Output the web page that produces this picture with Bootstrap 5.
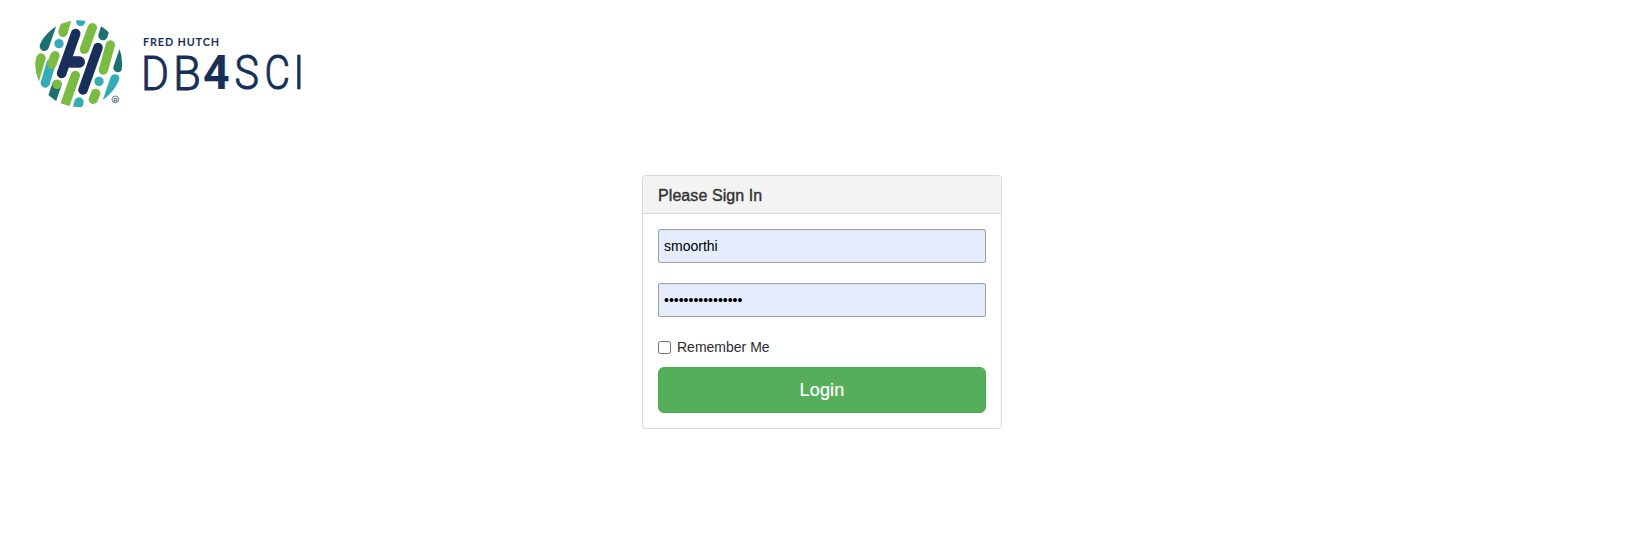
<!DOCTYPE html>
<html lang="en">
<head>
<meta charset="utf-8">
<title>DB4Sci</title>
<meta name="viewport" content="width=device-width, initial-scale=1">
<link href="https://cdn.jsdelivr.net/npm/bootstrap@5.3.0/dist/css/bootstrap.min.css" rel="stylesheet">
<style>
body { font-family: "Liberation Sans", Arial, sans-serif; font-size: 14px; line-height: 20px; color: #333; background: #fff; }
.brand-bar { padding: 15px 0 0 30px; height: 175px; }
.signin-area { padding-right: 5px; }
.signin { width: 360px; border: 1px solid #d9d9d9; border-radius: 4px; box-shadow: 0 1px 1px rgba(0,0,0,.05); }
.signin .card-header { height: 38px; padding: 2px 15px 0; background: #f3f3f3; border-color: #d9d9d9; }
.signin h1 { font-size: 16px; line-height: 18px; font-weight: 400; -webkit-text-stroke: .4px #333; letter-spacing: .08px; }
.signin .card-body { padding: 15px; }
.signin .form-control { height: 34px; padding: 0 5px; font-size: 14px; color: #000; background: #e5edfc; border: 1px solid #9fa1a5; border-radius: 2px; box-shadow: inset 0 1px 1px rgba(0,0,0,.05); }
.signin .field { margin-bottom: 20px; }
.signin .form-check-input { width: 13px; height: 13px; border: 1px solid #6f6f6f; border-radius: 2.5px; float: none; }
.remember { height: 20px; margin: 20px 0 10px; gap: 6px; color: #2b2b2b; }
.btn-login { height: 46px; padding: 0; font-size: 18px; letter-spacing: .2px; color: #fff; background: #55af5a; border: 1px solid #4caa50; border-radius: 6px; -webkit-text-stroke: .2px #fff; }
.btn-login:hover { color: #fff; background: #499c4e; }
</style>
</head>
<body>
<header class="brand-bar">
  <svg class="d-block" width="280" height="100" viewBox="0 0 280 100" role="img" aria-label="Fred Hutch DB4SCI">
    <defs><clipPath id="disc"><circle cx="146" cy="146" r="130.500"/></clipPath></defs>
    <g transform="scale(.33333)">
      <g clip-path="url(#disc)" fill="none" stroke-width="28" stroke-linecap="round">
        <g stroke="#1d7072">
          <path d="M43 94L66 28M219 62L233 16M264 158L284 100M81 208L62 264"/>
        </g>
        <g stroke="#35acb5">
          <path d="M152 6V19M63 146L46 204M147 261L138 292M87 86h.1M207 199h.1"/>
        </g>
        <g stroke="#7abb42">
          <path d="M110 15L99 52M187 38L163 103M241 90L220 165M197 235L190 253M136 181L104 272M75 122L65 148M33 129L12 200M81 208h.1"/>
        </g>
        <path d="M241 188C246 173 270 174 269 194C265 220 246 244 215 264Z" fill="#35acb5"/>
        <path d="M137 56L95 175M204 98L159 225" stroke="#17305a" stroke-width="29"/>
        <path d="M122 141H148" stroke="#17305a" stroke-width="34"/>
      </g>
      <circle cx="256" cy="253" r="10" fill="#fff" stroke="#42606f" stroke-width="2.500"/>
    </g>
    <text x="85.400" y="86.500" text-anchor="middle" font-family="Liberation Sans, sans-serif" font-size="5.500" font-weight="700" fill="#42606f">R</text>
    <text x="113" y="30.500" textLength="76" font-family="Lato, sans-serif" font-size="10.800" font-weight="700" fill="#17305a">FRED HUTCH</text>
    <g fill="#17305a" font-family="Roboto, sans-serif" font-size="49">
      <g font-weight="300" stroke="#17305a" stroke-width="1">
        <text transform="translate(111 74.500) scale(.87 1)">D</text>
        <text transform="translate(143 74.500) scale(.93 1)">B</text>
        <text transform="translate(204.500 74) scale(.84 1)">S</text>
        <text transform="translate(234.500 74) scale(.8 1)">C</text>
        <text transform="translate(262.300 73.500)" stroke-width=".3">I</text>
      </g>
      <text transform="translate(173 74) scale(.95 1)" font-weight="700">4</text>
    </g>
  </svg>
</header>
<main class="signin-area d-flex">
  <section class="card signin mx-auto" aria-label="Sign in">
    <div class="card-header d-flex align-items-center"><h1 class="m-0">Please Sign In</h1></div>
    <form class="card-body">
      <div class="field"><input class="form-control" type="text" value="smoorthi" aria-label="Username"></div>
      <div class="field"><input class="form-control" type="password" value="abcdefghijklmnop" aria-label="Password"></div>
      <label class="remember d-flex align-items-center"><input class="form-check-input m-0" type="checkbox">Remember Me</label>
      <button class="btn btn-login w-100 d-block" type="button">Login</button>
    </form>
  </section>
</main>
<script src="https://cdn.jsdelivr.net/npm/bootstrap@5.3.0/dist/js/bootstrap.bundle.min.js"></script>
</body>
</html>
